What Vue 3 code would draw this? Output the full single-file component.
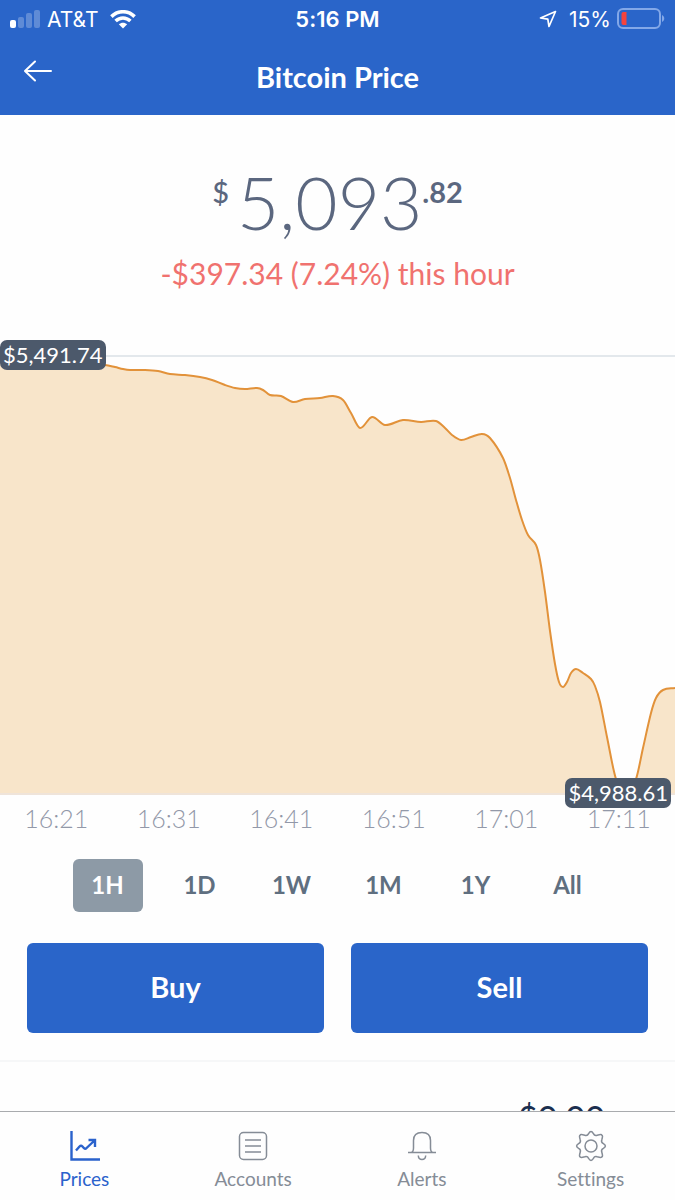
<script setup>
import { ref, computed } from 'vue';

const ranges = ['1H', '1D', '1W', '1M', '1Y', 'All'];
const selectedRange = ref('1H');

const times = ['16:21', '16:31', '16:41', '16:51', '17:01', '17:11'];

const tabs = [
  { id: 'prices', label: 'Prices' },
  { id: 'accounts', label: 'Accounts' },
  { id: 'alerts', label: 'Alerts' },
  { id: 'settings', label: 'Settings' },
];
const activeTab = ref('prices');

// Chart points, y counted down from the high line
const chartWidth = 675;
const chartHeight = 440;
const points = [
  [0, 6], [60, 7], [105, 10], [115, 12], [123, 14], [130, 15], [145, 15], [158, 16],
  [170, 19], [185, 20], [200, 22], [212, 25], [225, 30], [235, 33], [245, 34],
  [257, 33], [263, 35], [270, 40], [281, 41], [293, 47], [305, 44], [320, 43],
  [333, 41], [343, 45], [351, 58], [360, 73], [372, 62], [385, 70], [403, 65],
  [421, 67], [436, 66], [445, 73], [452, 80], [461, 85], [471, 82], [482, 79],
  [490, 83], [503, 103], [510, 123], [516, 145], [522, 165], [528, 180], [536, 190],
  [540, 205], [545, 237], [550, 276], [555, 309], [559, 327], [563, 332],
  [567, 327], [571, 318], [576, 314], [583, 318], [591, 324], [595, 331],
  [600, 347], [607, 382], [616, 424], [626, 439], [636, 424], [643, 393],
  [651, 358], [656, 343], [663, 335], [675, 333],
];

const linePath = computed(() => {
  const slope = (i) => {
    const a = points[Math.max(i - 1, 0)];
    const b = points[Math.min(i + 1, points.length - 1)];
    return (b[1] - a[1]) / (b[0] - a[0]);
  };
  let d = `M${points[0][0]} ${points[0][1]}`;
  for (let i = 1; i < points.length; i++) {
    const [x0, y0] = points[i - 1];
    const [x1, y1] = points[i];
    const h = (x1 - x0) / 3;
    d += ` C${x0 + h} ${y0 + slope(i - 1) * h} ${x1 - h} ${y1 - slope(i) * h} ${x1} ${y1}`;
  }
  return d;
});

const areaPath = computed(() => `${linePath.value} V${chartHeight} H0 Z`);
</script>

<template>
  <div class="app">
    <header class="header">
      <div class="status-bar">
        <div class="status-left">
          <svg class="signal" width="31" height="20" viewBox="0 0 31 20" fill="#fff">
            <rect x="0" y="11" width="6" height="8" rx="2" />
            <rect x="8" y="8" width="6" height="11" rx="2" opacity="0.25" />
            <rect x="16" y="4" width="6" height="15" rx="2" opacity="0.25" />
            <rect x="24" y="1" width="6" height="18" rx="2" opacity="0.25" />
          </svg>
          <span>AT&amp;T</span>
          <svg class="wifi" width="26" height="19" viewBox="0 0 26 19">
            <g fill="none" stroke="#fff" stroke-width="3.6">
              <path d="M1.4 6.6 C8 0.1 18 0.1 24.6 6.6" />
              <path d="M5.6 11 C10 6.9 16 6.9 20.4 11" />
            </g>
            <path d="M13 18.4 L8.8 14.3 C11.2 12.1 14.8 12.1 17.2 14.3 Z" fill="#fff" />
          </svg>
        </div>
        <span class="clock">5:16 PM</span>
        <div class="status-right">
          <svg class="location" width="18" height="18" viewBox="0 0 18 18" fill="none" stroke="#fff" stroke-width="1.7" stroke-linejoin="round">
            <path d="M16.5 1.5 L1.5 8 L8.8 9.2 L10 16.5 Z" />
          </svg>
          <span>15%</span>
          <svg width="48" height="22" viewBox="0 0 48 22">
            <rect x="1" y="1" width="42" height="19" rx="5" fill="none" stroke="#83a8e8" stroke-width="2" />
            <path d="M45 7 C48 8.5 48 12.5 45 14 Z" fill="#83a8e8" />
            <path d="M9.5 4 V17 H6.5 Q4.5 17 4.5 15 V6 Q4.5 4 6.5 4 Z" fill="#f5433d" />
          </svg>
        </div>
      </div>
      <div class="nav-bar">
        <button class="back" aria-label="Back">
          <svg width="28" height="22" viewBox="0 0 28 22" fill="none" stroke="#fff" stroke-width="2" stroke-linecap="round" stroke-linejoin="round">
            <path d="M11 1.5 L1 11 L11 20.5 M1 11 H27" />
          </svg>
        </button>
        <h1 class="title">Bitcoin Price</h1>
      </div>
    </header>

    <main class="content">
      <section class="price">
        <div class="amount">
          <span class="currency">$</span>
          <span class="whole">5,093</span>
          <span class="cents">.82</span>
        </div>
        <p class="change">-$397.34 (7.24%) this hour</p>
      </section>

      <section class="chart">
        <svg class="plot" :viewBox="`0 0 ${chartWidth} ${chartHeight}`" preserveAspectRatio="none">
          <path d="M0 1 H675" stroke="#e3e8ec" stroke-width="2" />
          <path :d="areaPath" fill="#f8e5ca" />
          <path d="M0 439 H675" stroke="#efe4da" stroke-width="2" />
          <path class="line" :d="linePath" />
        </svg>
        <span class="badge high">$5,491.74</span>
        <span class="badge low">$4,988.61</span>
      </section>

      <div class="times">
        <span v-for="time in times" :key="time">{{ time }}</span>
      </div>

      <div class="ranges">
        <button
          v-for="range in ranges"
          :key="range"
          class="range"
          :class="{ selected: range === selectedRange }"
          @click="selectedRange = range"
        >
          {{ range }}
        </button>
      </div>

      <div class="actions">
        <button class="action">Buy</button>
        <button class="action">Sell</button>
      </div>

      <section class="balance">
        <span>$0.00</span>
      </section>
    </main>

    <nav class="tab-bar">
      <a
        v-for="tab in tabs"
        :key="tab.id"
        href="#"
        class="tab"
        :class="{ active: tab.id === activeTab }"
        @click.prevent="activeTab = tab.id"
      >
        <svg v-if="tab.id === 'prices'" width="32" height="32" viewBox="0 0 32 32" fill="none" stroke="currentColor" stroke-width="2.4">
          <path d="M3.5 1 V29.5 H32" />
          <path d="M8 20.5 L11.5 16.5 Q13 15 14.5 16.5 L16 18.2 Q17.3 19.4 18.6 18 L26.5 10.5 M20.5 10 H27 V17" />
        </svg>
        <svg v-else-if="tab.id === 'accounts'" width="32" height="32" viewBox="0 0 32 32" fill="none" stroke="currentColor" stroke-width="1.5">
          <rect x="2.5" y="2.5" width="27" height="27" rx="4" />
          <path d="M8 10 H24 M8 16 H24 M8 22 H24" />
        </svg>
        <svg v-else-if="tab.id === 'alerts'" width="32" height="32" viewBox="0 0 32 32" fill="none" stroke="currentColor" stroke-width="1.5">
          <path d="M2 22.5 H30 M5 22.5 Q7.5 22 7.5 18 V10.5 Q7.5 2.5 16 2.5 Q24.5 2.5 24.5 10.5 V18 Q24.5 22 27 22.5" />
          <path d="M12.3 25.5 Q12.5 29.5 16 29.5 Q19.5 29.5 19.7 25.5" />
        </svg>
        <svg v-else width="32" height="32" viewBox="0 0 32 32" fill="none" stroke="currentColor" stroke-width="1.5" stroke-linejoin="round">
          <path d="M13.6 3.6 Q16 -0.4 18.4 3.6 Q19.6 6.2 22.2 5.2 Q26.8 3.8 26.8 5.2 Q28.2 5.2 26.8 9.8 Q25.8 12.4 28.4 13.6 Q32.4 16 28.4 18.4 Q25.8 19.6 26.8 22.2 Q28.2 26.8 26.8 26.8 Q26.8 28.2 22.2 26.8 Q19.6 25.8 18.4 28.4 Q16 32.4 13.6 28.4 Q12.4 25.8 9.8 26.8 Q5.2 28.2 5.2 26.8 Q3.8 26.8 5.2 22.2 Q6.2 19.6 3.6 18.4 Q-0.4 16 3.6 13.6 Q6.2 12.4 5.2 9.8 Q3.8 5.2 5.2 5.2 Q5.2 3.8 9.8 5.2 Q12.4 6.2 13.6 3.6 Z" />
          <circle cx="16" cy="16" r="6" />
        </svg>
        <span>{{ tab.label }}</span>
      </a>
    </nav>
  </div>
</template>

<style>
body {
  margin: 0;
  background: #fefefe;
}
</style>

<style scoped>
.app {
  display: flex;
  flex-direction: column;
  height: 100vh;
  font-family: Lato, "Open Sans", sans-serif;
  font-variant-ligatures: none;
  color: #5b677f;
}

button {
  border: 0;
  padding: 0;
  background: none;
  font-family: inherit;
  cursor: pointer;
}

svg {
  display: block;
}

.header {
  background: #2a65c9;
  color: #fff;
}

.status-bar {
  display: grid;
  grid-template-columns: 1fr auto 1fr;
  align-items: center;
  height: 38px;
  padding: 0 10px;
  font-family: Inter, Roboto, sans-serif;
  font-size: 21px;
}

.status-left,
.status-right {
  display: flex;
  align-items: center;
}

.status-left {
  gap: 6px;
}

.wifi {
  margin-left: 6px;
}

.status-right {
  justify-content: flex-end;
  gap: 6px;
}

.location {
  margin-right: 6px;
}

.clock {
  font-size: 22px;
  font-weight: 600;
}

.nav-bar {
  display: grid;
  grid-template-columns: 1fr auto 1fr;
  align-items: center;
  height: 77px;
  padding: 0 24px;
}

.back {
  justify-self: start;
  padding-bottom: 12px;
}

.title {
  margin: 0;
  font-size: 29px;
  font-weight: 700;
}

.content {
  flex: 1;
  min-height: 0;
  overflow-y: auto;
  scrollbar-width: none;
}

.price {
  display: flex;
  flex-direction: column;
  align-items: center;
  height: 240px;
  box-sizing: border-box;
  padding-top: 44px;
}

.amount {
  display: flex;
  align-items: flex-start;
}

.currency,
.cents {
  padding-top: 16px;
  font-size: 29px;
  font-weight: 700;
  line-height: 34px;
}

.currency {
  margin-right: 8px;
  font-weight: 500;
}

.whole {
  font-size: 73px;
  font-weight: 300;
  line-height: 86px;
}

.change {
  margin: 10px 0 0;
  font-size: 30px;
  line-height: 36px;
  color: #f0726f;
}

.chart {
  position: relative;
}

.plot {
  width: 100%;
  height: 440px;
}

.line {
  fill: none;
  stroke: #e2923a;
  stroke-width: 2;
  vector-effect: non-scaling-stroke;
}

.badge {
  position: absolute;
  padding: 0 3px 1px;
  border-radius: 7px;
  background: #4c596b;
  color: #fff;
  font-size: 22px;
  line-height: 29px;
}

.high {
  top: -15px;
  left: 0;
}

.low {
  right: 4px;
  bottom: -13px;
}

.times {
  display: grid;
  grid-template-columns: repeat(6, 1fr);
  height: 64px;
  text-align: center;
  font-size: 25px;
  font-weight: 300;
  line-height: 47px;
  color: #9298a8;
}

.ranges {
  display: flex;
  justify-content: center;
  gap: 22px;
}

.range {
  width: 70px;
  height: 53px;
  padding-bottom: 2px;
  border-radius: 6px;
  font-size: 24px;
  font-weight: 700;
  color: #5f6f80;
}

.range.selected {
  background: #8d9aa6;
  color: #fff;
}

.actions {
  display: flex;
  gap: 27px;
  padding: 31px 27px 27px;
}

.action {
  flex: 1;
  height: 90px;
  padding-bottom: 3px;
  border-radius: 6px;
  background: #2a65c9;
  color: #fff;
  font-size: 29px;
  font-weight: 700;
}

.balance {
  display: flex;
  justify-content: flex-end;
  border-top: 2px solid #f6f7f8;
  padding: 32px 70px;
  font-size: 34px;
  line-height: 48px;
  color: #1b2f4f;
}

.tab-bar {
  display: grid;
  grid-template-columns: repeat(4, 1fr);
  height: 88px;
  border-top: 1px solid #a9abae;
  background: #fefefe;
}

.tab {
  display: flex;
  flex-direction: column;
  align-items: center;
  gap: 5px;
  padding-top: 18px;
  font-size: 19px;
  line-height: 24px;
  color: #858c96;
  text-decoration: none;
}

.tab.active {
  color: #2a62cc;
}
</style>
